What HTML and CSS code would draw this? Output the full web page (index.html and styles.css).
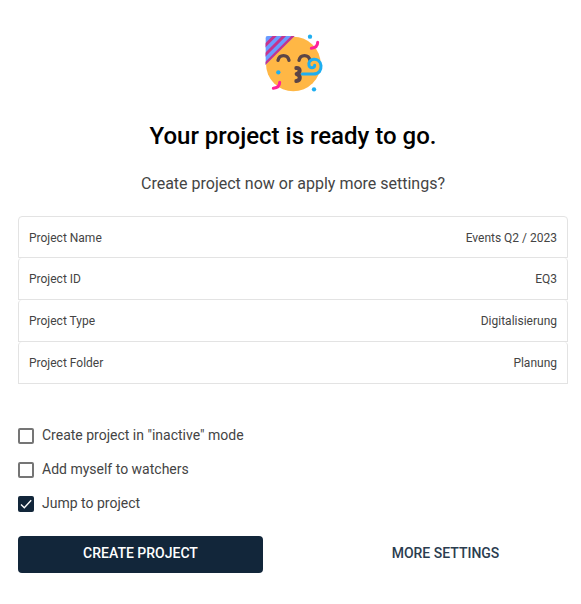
FILE: index.html
```html
<!DOCTYPE html>
<html lang="en">
<head>
    <meta charset="UTF-8">
    <meta name="viewport" content="width=device-width, initial-scale=1.0">
    <title>Create project</title>
    <link rel="stylesheet" href="styles.css">
</head>
<body>
    <div class="container">
        <svg class="emoji" viewBox="24 27 180 180" fill="none" stroke-linecap="round">
            <circle cx="115" cy="117" r="82" fill="#ffb745"/>
            <clipPath id="hat">
                <path d="M38 33H119L31 120V40Q31 33 38 33Z"/>
            </clipPath>
            <g clip-path="url(#hat)">
                <path d="M31 33H121L31 123Z" fill="#699bff"/>
                <path d="M22 70L70 22M22 98L98 22M22 126L126 22" stroke="#c4348f" stroke-width="9"/>
            </g>
            <path d="M69 106C73 87 98 87 102 106M132 106C136 87 161 87 165 106" stroke="#5c4546" stroke-width="10"/>
            <path d="M124 129C137 128 137 143 125 147C138 151 137 167 124 168" stroke="#5c4546" stroke-width="12" stroke-linejoin="round"/>
            <path d="M142 147H175C193 147 199 135 198 122C197 108 186 102 176 103C165 104 160 113 162 121C164 130 178 131 179 121" stroke="#1eaef0" stroke-width="9"/>
            <path d="M188 52C188 62 181 69 169 70M74 172C74 182 67 189 55 190" stroke="#ff2199" stroke-width="9"/>
            <g fill="#1eaef0">
                <circle cx="165" cy="35" r="6.5"/>
                <circle cx="70" cy="142" r="6.5"/>
                <circle cx="177" cy="193" r="6.5"/>
            </g>
        </svg>
        <h1>Your project is ready to go.</h1>
        <p class="subtitle">Create project now or apply more settings?</p>

        <div class="summary">
            <div class="row"><span>Project Name</span><span>Events Q2 / 2023</span></div>
            <div class="row"><span>Project ID</span><span>EQ3</span></div>
            <div class="row"><span>Project Type</span><span>Digitalisierung</span></div>
            <div class="row"><span>Project Folder</span><span>Planung</span></div>
        </div>

        <form id="projectForm">
            <label class="option">
                <input type="checkbox" name="inactive">
                <span class="box"><svg viewBox="0 0 16 16"><path d="M3 8.5L6.3 11.7L13.2 4.3"/></svg></span>
                <span class="text">Create project in "inactive" mode</span>
            </label>
            <label class="option">
                <input type="checkbox" name="watch">
                <span class="box"><svg viewBox="0 0 16 16"><path d="M3 8.5L6.3 11.7L13.2 4.3"/></svg></span>
                <span class="text">Add myself to watchers</span>
            </label>
            <label class="option">
                <input type="checkbox" name="jump" checked>
                <span class="box"><svg viewBox="0 0 16 16"><path d="M3 8.5L6.3 11.7L13.2 4.3"/></svg></span>
                <span class="text">Jump to project</span>
            </label>
            <div class="buttons">
                <button type="submit" class="primary">Create project</button>
                <button type="button" class="secondary">More settings</button>
            </div>
        </form>
    </div>
</body>
</html>
```
FILE: styles.css
```css
body {
    font-family: Roboto, sans-serif;
    margin: 0;
    background-color: #fff;
    color: #444;
}

.container {
    display: flex;
    flex-direction: column;
    padding: 34px 13px 0 18px;
}

.emoji {
    width: 60px;
    height: 60px;
    align-self: center;
}

h1 {
    margin: 26px 0 0;
    font-size: 24px;
    font-weight: 500;
    line-height: 32px;
    text-align: center;
    color: #000;
}

.subtitle {
    margin: 20px 0 0;
    font-size: 16px;
    line-height: 24px;
    text-align: center;
}

.summary {
    margin-top: 20px;
}

.row {
    display: flex;
    justify-content: space-between;
    align-items: center;
    box-sizing: border-box;
    height: 42px;
    padding: 0 10px;
    border: 1px solid #e3e3e3;
    border-top: none;
    border-radius: 4px 4px 0 0;
    font-size: 12px;
}

.row:first-child {
    border-top: 1px solid #e3e3e3;
    padding-top: 2px;
}

form {
    margin-top: 42px;
}

.option {
    display: flex;
    align-items: center;
    gap: 8px;
    height: 20px;
    margin-bottom: 14px;
    font-size: 14px;
}

.option input {
    display: none;
}

.option .text {
    padding-bottom: 2px;
}

.box {
    box-sizing: border-box;
    width: 16px;
    height: 16px;
    border: 2px solid #757575;
    border-radius: 2px;
}

.box svg {
    display: none;
    width: 16px;
    height: 16px;
    fill: none;
    stroke: #fff;
    stroke-width: 1.4;
}

.option input:checked + .box {
    border: none;
    background-color: #12263a;
}

.option input:checked + .box svg {
    display: block;
}

.buttons {
    display: flex;
    justify-content: space-between;
    margin-top: 22px;
}

button {
    width: 245px;
    height: 37px;
    padding: 0 0 4px;
    border: none;
    border-radius: 4px;
    font-family: inherit;
    font-size: 14px;
    font-weight: 500;
    text-transform: uppercase;
    cursor: pointer;
}

.primary {
    background-color: #12263a;
    color: #fff;
}

.secondary {
    background-color: transparent;
    color: #2b3d4f;
}
```
